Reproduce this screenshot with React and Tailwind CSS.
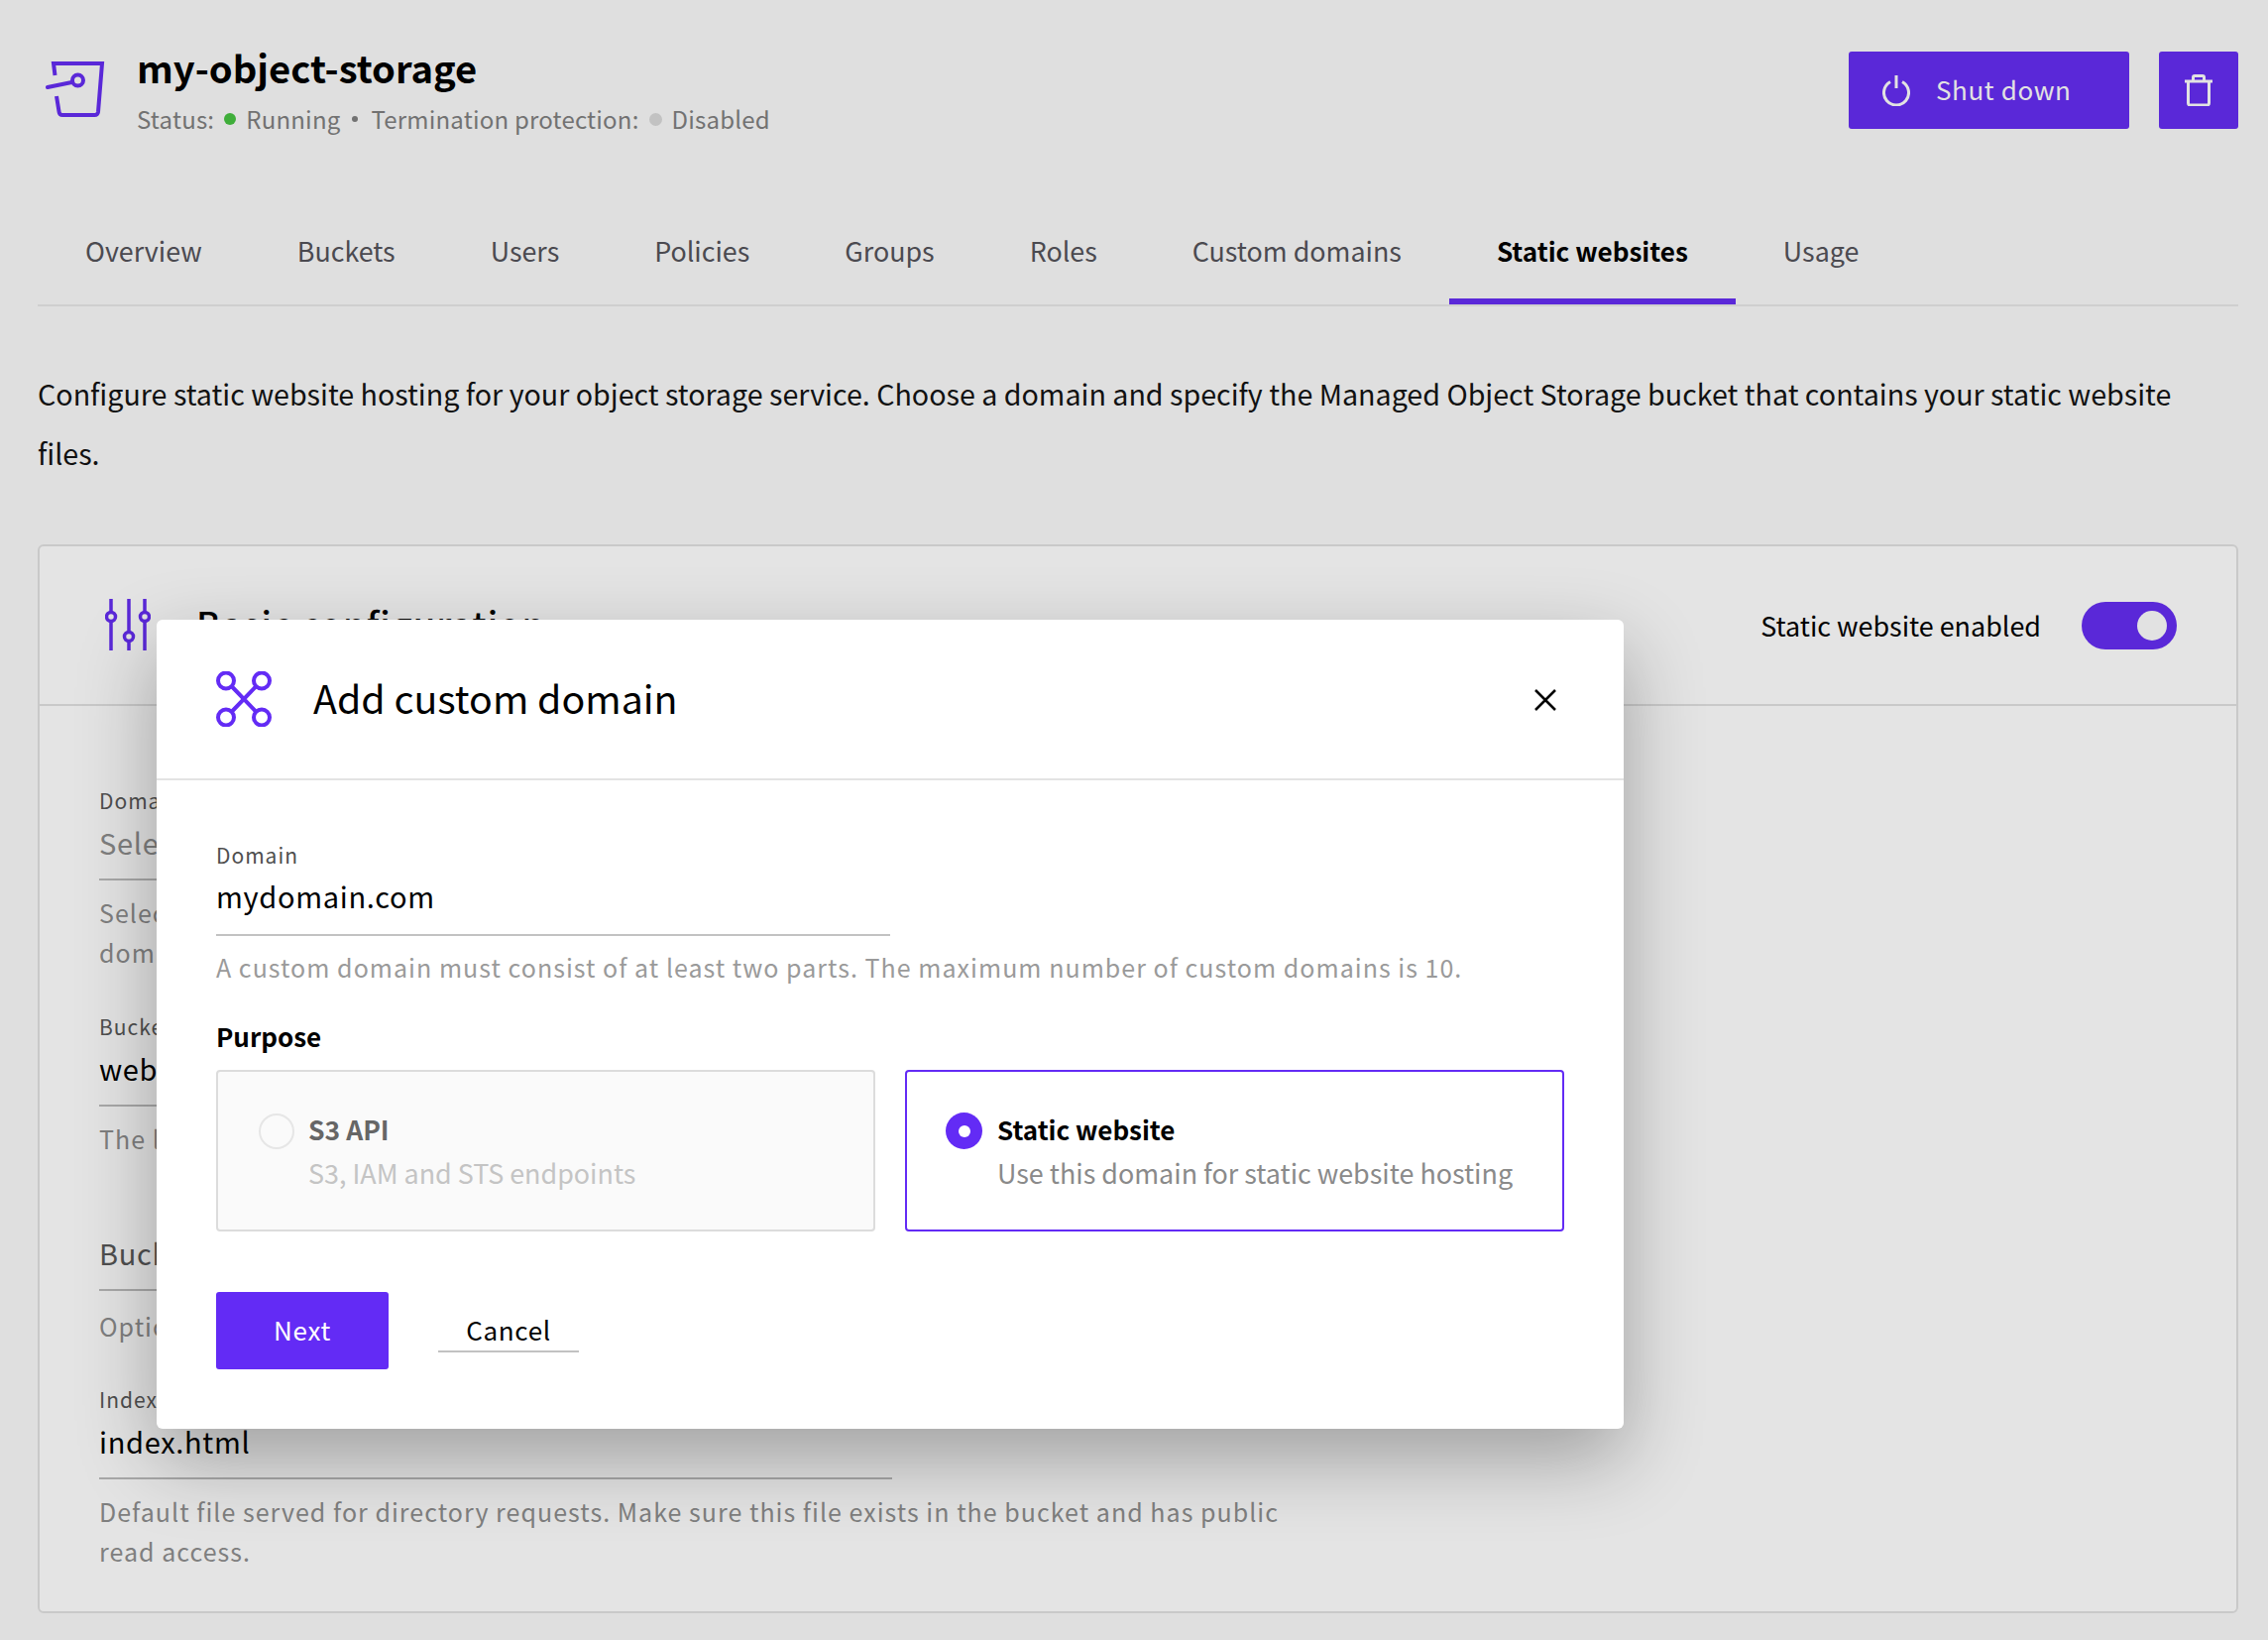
import React from "react";

const Tab = ({ children, active }) => (
  <div className={`h-[102px] px-[48px] flex items-center ${active ? "text-[26.1px] leading-[40px] font-bold text-black border-b-[6px] border-[#5a28d8]" : "text-[26.85px] leading-[40px] pb-[6px] text-[#4b4a50]"}`}>
    {children}
  </div>
);

const Field = ({ label, value, valueClass = "text-black", help, helpClass = "mt-[12px]", className = "" }) => (
  <div className={className}>
    {label && <div className="h-[30px] text-[21px] leading-[30px] tracking-[1px] text-[#4f4f4f] whitespace-nowrap">{label}</div>}
    <div className={`w-[800px] border-b-2 border-[#a8a8a8] pt-[5px] pb-[15px] text-[29px] leading-[44px] tracking-[0.7px] whitespace-nowrap ${valueClass}`}>{value}</div>
    <div className={`w-[1200px] text-[25px] leading-[40px] tracking-[1.03px] text-[#7f7f7f] ${helpClass}`}>{help}</div>
  </div>
);

const Radio = ({ checked }) =>
  checked ? (
    <div className="w-[37px] h-[37px] mt-[5px] shrink-0 rounded-full bg-[#632bf5] flex items-center justify-center">
      <div className="w-[12px] h-[12px] rounded-full bg-white" />
    </div>
  ) : (
    <div className="w-[36px] h-[36px] mt-[6px] shrink-0 rounded-full border-2 border-[#e6e6e6] bg-[#fafafa]" />
  );

export default function App() {
  return (
    <div className="relative w-[2288px] h-[1654px] overflow-hidden bg-[#dfdfdf] font-['Noto_Sans_CJK_SC','Noto_Sans',sans-serif]">
      <div className="pl-[38px] pr-[30px]">
        {/* header */}
        <div className="flex justify-between pt-[43px]">
          <div className="flex items-start">
            <svg className="ml-[8px] mt-[17px] shrink-0" width="60" height="60" viewBox="45 60 60 60" fill="none" stroke="#5a28d8" strokeWidth="4">
              <path d="M54.500 76 L53 64 H102 L98 113 Q97.500 116 94.500 116 H62 Q59 116 58.600 113 L56 97" />
              <circle cx="77.500" cy="81" r="5.500" />
              <path d="M47 88 L71.500 83" strokeLinecap="round" />
            </svg>
            <div className="ml-[32px]">
              <div className="text-[38.2px] leading-[50px] font-bold text-black whitespace-nowrap">my-object-storage</div>
              <div className="mt-[9px] flex items-center h-[36px] text-[24px] leading-[36px] tracking-[0.2px] text-[#727272] whitespace-nowrap">
                <span>Status:</span>
                <span className="ml-[10px] w-[12px] h-[12px] rounded-full bg-[#3fae3a]" />
                <span className="ml-[10px]">Running</span>
                <span className="ml-[12px] w-[6px] h-[6px] rounded-full bg-[#727272]" />
                <span className="ml-[13px]">Termination protection:</span>
                <span className="ml-[10px] w-[13px] h-[13px] rounded-full bg-[#c2c2c2]" />
                <span className="ml-[10px]">Disabled</span>
              </div>
            </div>
          </div>
          <div className="flex mt-[9px] gap-[30px]">
            <div className="w-[283px] h-[78px] rounded-[3px] bg-[#5a28d8] flex items-center pl-[34px] text-[#e2e2e2]">
              <svg width="28" height="32" viewBox="0 0 28 32" fill="none" stroke="currentColor" strokeWidth="3">
                <path d="M8 7.500 A12.500 12.500 0 1 0 20 7.500" />
                <path d="M14 1 V14" />
              </svg>
              <span className="ml-[26px] pb-[2px] text-[26px] leading-[40px] tracking-[0.6px]">Shut down</span>
            </div>
            <div className="w-[80px] h-[78px] rounded-[3px] bg-[#5a28d8] flex items-center justify-center text-[#e2e2e2]">
              <svg width="28" height="32" viewBox="0 0 28 32" fill="none" stroke="currentColor" strokeWidth="3">
                <path d="M0 7 H28" />
                <path d="M8.500 7 V3 Q8.500 1.500 10 1.500 H18 Q19.500 1.500 19.500 3 V7" />
                <path d="M3.500 7 V29 Q3.500 31 5.500 31 H22.500 Q24.500 31 24.500 29 V7" />
              </svg>
            </div>
          </div>
        </div>

        {/* tabs */}
        <div className="mt-[67px] flex border-b-2 border-[#cfcfcf]">
          <Tab>Overview</Tab>
          <Tab>Buckets</Tab>
          <Tab>Users</Tab>
          <Tab>Policies</Tab>
          <Tab>Groups</Tab>
          <Tab>Roles</Tab>
          <Tab>Custom domains</Tab>
          <Tab active>Static websites</Tab>
          <Tab>Usage</Tab>
        </div>

        <p className="mt-[58px] text-[28.65px] leading-[60px] text-[#111]">
          Configure static website hosting for your object storage service. Choose a domain and specify the Managed Object Storage bucket that contains your static website files.
        </p>

        {/* card */}
        <div className="mt-[62px] rounded-[6px] border-2 border-[#c9c9c9] bg-[#e4e4e4]">
          <div className="h-[161px] border-b-2 border-[#c9c9c9] flex items-center pl-[66px] pr-[60px] justify-between">
            <div className="flex items-center">
              <svg className="-mt-[1px]" width="46" height="52" viewBox="0 0 46 52" fill="none" stroke="#5a28d8" strokeWidth="3.500">
                <path d="M6 0 V14 M6 23 V52" />
                <circle cx="6" cy="18" r="4.500" />
                <path d="M24 0 V33 M24 42 V52" />
                <circle cx="24" cy="38" r="4.500" />
                <path d="M40 0 V14 M40 23 V52" />
                <circle cx="40" cy="18" r="4.500" />
              </svg>
              <div className="ml-[46px] -mt-[6px] text-[36.3px] leading-[48px] font-medium tracking-[1px] text-black whitespace-nowrap">Basic configuration</div>
            </div>
            <div className="flex items-center">
              <span className="text-[26.9px] leading-[40px] text-black whitespace-nowrap">Static website enabled</span>
              <div className="ml-[41px] w-[96px] h-[48px] rounded-full bg-[#5a28d8] flex items-center justify-end pr-[10px]">
                <div className="w-[30px] h-[30px] rounded-full bg-[#e2e2e2]" />
              </div>
            </div>
          </div>
          <div className="pl-[60px] pt-[80px] pb-[41px]">
            <Field
              label="Domain"
              value="Select a domain"
              valueClass="text-[#7f7f7f]"
              help={<>Select one of the custom domains configured for this service, or add a new custom<br />domain first.</>}
            />
            <Field className="mt-[40px]" label="Bucket" value="website-bucket" help="The linked bucket that contains your static website files." />
            <Field className="mt-[68px]" helpClass="mt-[15px]" value="Bucket prefix" valueClass="text-[#4f4f4f]" help="Optional path inside the bucket." />
            <Field className="mt-[39px]" label="Index document" value="index.html" help="Default file served for directory requests. Make sure this file exists in the bucket and has public read access." />
          </div>
        </div>
      </div>

      {/* modal */}
      <div className="absolute left-[158px] top-[625px] w-[1480px] h-[816px] rounded-[6px] bg-white shadow-[0_30px_80px_rgba(0,0,0,0.3)]">
        <div className="h-[162px] border-b-2 border-[#e3e3e3] flex items-center pl-[60px] pr-[67px]">
          <svg width="56" height="56" viewBox="0 0 56 56" fill="none" stroke="#632bf5" strokeWidth="4">
            <circle cx="10" cy="9.500" r="8" />
            <circle cx="46" cy="9.500" r="8" />
            <circle cx="10" cy="46.500" r="8" />
            <circle cx="46" cy="46.500" r="8" />
            <path d="M16 15.500 L40 40.500 M40 15.500 L16 40.500" />
          </svg>
          <div className="ml-[42px] pb-[4px] text-[39.3px] leading-[56px] text-black flex-1 whitespace-nowrap">Add custom domain</div>
          <svg className="mt-[2px]" width="24" height="24" viewBox="0 0 24 24" fill="none" stroke="black" strokeWidth="2.500">
            <path d="M2 2 L22 22 M22 2 L2 22" />
          </svg>
        </div>
        <div className="px-[60px] pt-[60px]">
          <div className="h-[30px] text-[21px] leading-[30px] tracking-[1px] text-[#4f4f4f]">Domain</div>
          <div className="w-[680px] border-b-2 border-[#c2c2c2] pt-[4px] pb-[17px] text-[29px] leading-[44px] tracking-[0.7px] text-black">mydomain.com</div>
          <div className="mt-[11px] text-[25px] leading-[40px] tracking-[1.03px] text-[#9a9a9a] whitespace-nowrap">A custom domain must consist of at least two parts. The maximum number of custom domains is 10.</div>
          <div className="mt-[32px] text-[26px] leading-[36px] font-bold text-black">Purpose</div>
          <div className="mt-[16px] flex gap-[30px]">
            <div className="w-[665px] h-[163px] rounded-[4px] border-2 border-[#dcdcdc] bg-[#fafafa] pl-[41px] pt-[36px] flex gap-[14px]">
              <Radio />
              <div>
                <div className="text-[26.5px] leading-[44px] font-bold text-[#666]">S3 API</div>
                <div className="text-[26.9px] leading-[44px] text-[#c4c4c4]">S3, IAM and STS endpoints</div>
              </div>
            </div>
            <div className="w-[665px] h-[163px] rounded-[4px] border-2 border-[#632bf5] bg-white pl-[39px] pt-[36px] flex gap-[15px]">
              <Radio checked />
              <div>
                <div className="text-[26px] leading-[44px] font-bold text-black">Static website</div>
                <div className="text-[26.9px] leading-[44px] text-[#8a8a8a]">Use this domain for static website hosting</div>
              </div>
            </div>
          </div>
          <div className="mt-[61px] flex items-start">
            <div className="w-[174px] h-[78px] rounded-[3px] bg-[#632bf5] flex items-center justify-center pb-[2px] text-[26px] leading-[40px] tracking-[0.7px] text-white">Next</div>
            <div className="ml-[50px] mt-[19px] w-[142px] border-b-2 border-[#c2c2c2] text-center text-[26px] leading-[38px] pb-[2px] tracking-[0.7px] text-black">Cancel</div>
          </div>
        </div>
      </div>
    </div>
  );
}
